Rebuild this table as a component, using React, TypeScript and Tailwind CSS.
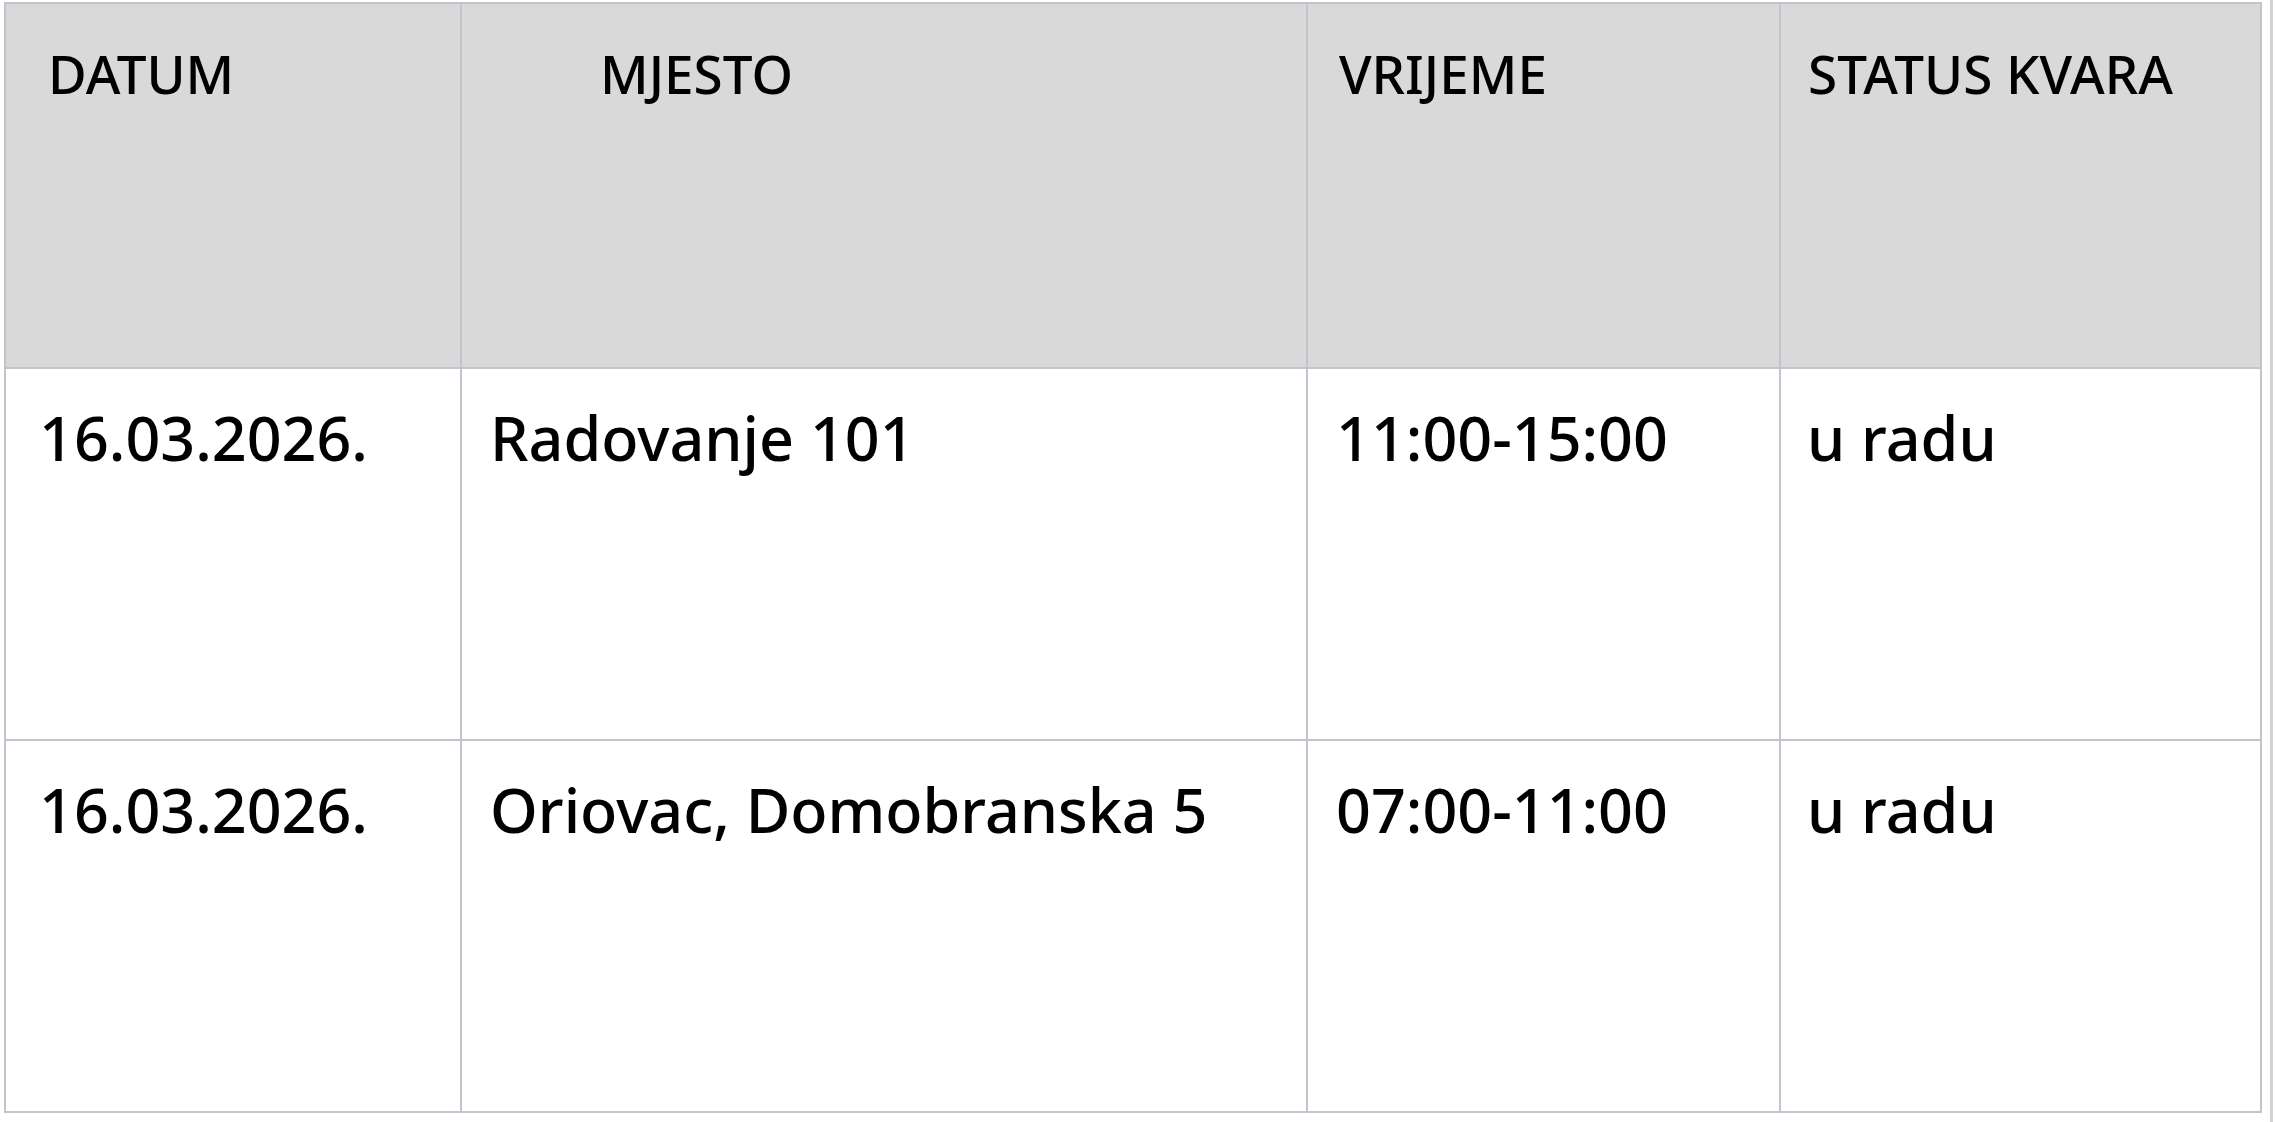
import React from "react";

const rows = [
  { datum: "16.03.2026.", mjesto: "Radovanje 101", vrijeme: "11:00-15:00", status: "u radu" },
  { datum: "16.03.2026.", mjesto: "Oriovac, Domobranska 5", vrijeme: "07:00-11:00", status: "u radu" },
];

const th = "border-2 border-[#c0c4cc] align-top text-left font-medium text-[53px] leading-none pt-[43px]";
const td = "border-2 border-[#c0c4cc] align-top font-medium text-[61px] leading-none pt-[38px]";

export default function App() {
  return (
    <div className="w-[2275px] h-[1122px] bg-white flex" style={{ fontFamily: '"Noto Sans", "Open Sans", sans-serif' }}>
      <div className="pl-[4px] pt-[2px]">
        <table className="table-fixed border-collapse text-black">
          <colgroup>
            <col className="w-[456px]" />
            <col className="w-[846px]" />
            <col className="w-[473px]" />
            <col className="w-[481px]" />
          </colgroup>
          <thead>
            <tr className="h-[365px] bg-[#d9d9d9]">
              <th className={`${th} pl-[42px]`}>DATUM</th>
              <th className={`${th} pl-[138px]`}>MJESTO</th>
              <th className={`${th} pl-[31px]`}>VRIJEME</th>
              <th className={`${th} pl-[27px] whitespace-nowrap`}>STATUS KVARA</th>
            </tr>
          </thead>
          <tbody>
            {rows.map((r, i) => (
              <tr key={i} className="h-[372px] bg-white">
                <td className={`${td} pl-[33px]`}>{r.datum}</td>
                <td className={`${td} pl-[28px]`}>{r.mjesto}</td>
                <td className={`${td} pl-[28px]`}>{r.vrijeme}</td>
                <td className={`${td} pl-[26px]`}>{r.status}</td>
              </tr>
            ))}
          </tbody>
        </table>
      </div>
      <div className="ml-[8px] w-[3px] h-full bg-[#d2d2d2]" />
    </div>
  );
}
